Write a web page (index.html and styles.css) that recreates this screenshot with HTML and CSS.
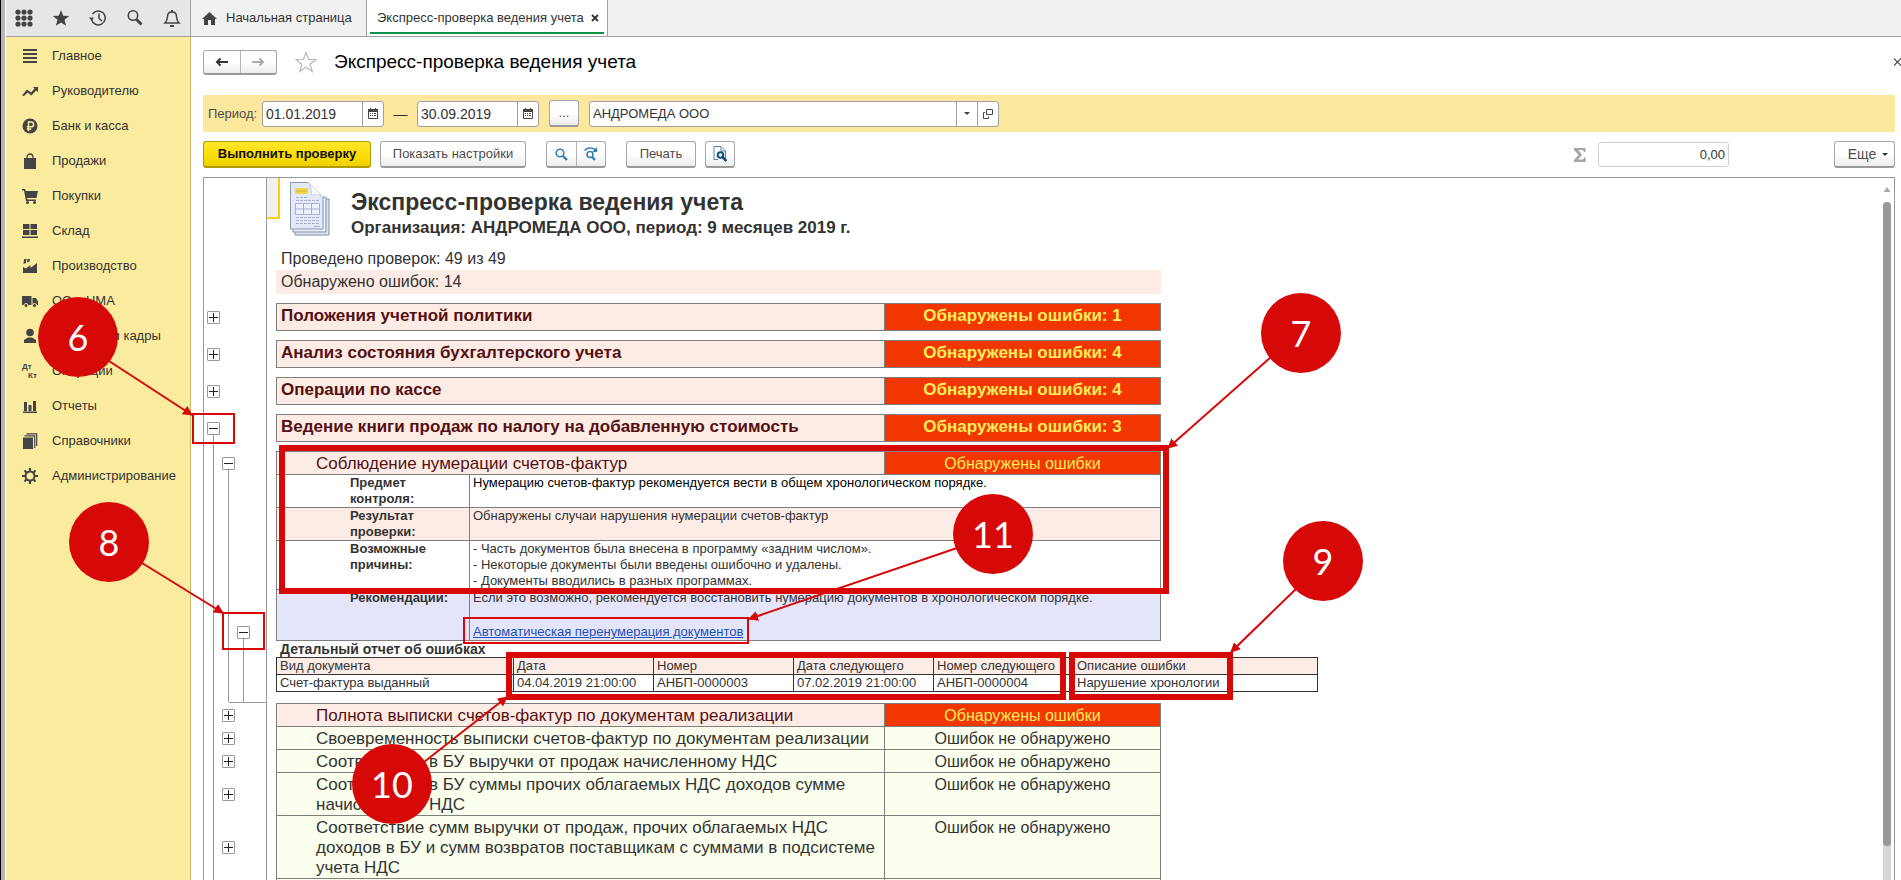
FILE: index.html
```html
<!DOCTYPE html>
<html lang="ru">
<head>
<meta charset="utf-8">
<title>Экспресс-проверка ведения учета</title>
<link rel="stylesheet" href="styles.css">
</head>
<body>
<div class="app">
  <header class="topbar">
    <div class="tools">
      <button class="tool" aria-label="Меню"><svg width="18" height="18" viewBox="0 0 18 18" fill="#444"><circle cx="3" cy="3" r="2.6"/><circle cx="9" cy="3" r="2.6"/><circle cx="15" cy="3" r="2.6"/><circle cx="3" cy="9" r="2.6"/><circle cx="9" cy="9" r="2.6"/><circle cx="15" cy="9" r="2.6"/><circle cx="3" cy="15" r="2.6"/><circle cx="9" cy="15" r="2.6"/><circle cx="15" cy="15" r="2.6"/></svg></button>
      <button class="tool" aria-label="Избранное"><svg width="18" height="18" viewBox="0 0 18 18" fill="#444"><path d="M9 1l2.200 5.700 6 .3-4.700 3.800 1.600 5.900L9 13.400l-5.100 3.300 1.600-5.900L.8 7l6-.3z"/></svg></button>
      <button class="tool" aria-label="История"><svg width="18" height="18" viewBox="0 0 18 18" fill="none" stroke="#444" stroke-width="1.500"><path d="M2.500 10.500A7 7 0 1 0 3.500 5"/><path d="M10 4.500v5l3 2.500"/><path d="M0 8.500h5l-2.500 3.200z" fill="#444" stroke="none"/></svg></button>
      <button class="tool" aria-label="Поиск"><svg width="18" height="18" viewBox="0 0 18 18" fill="none" stroke="#444"><circle cx="7" cy="6.500" r="4.700" stroke-width="1.600"/><path d="M10.500 10.500l5 5" stroke-width="3"/></svg></button>
      <button class="tool" aria-label="Уведомления"><svg width="18" height="18" viewBox="0 0 18 18" fill="none" stroke="#444" stroke-width="1.500"><path d="M2 14h14c-2-2-2.500-3-2.500-6.500C13.500 4.500 12 3 9 3S4.500 4.500 4.500 7.500C4.500 11 4 12 2 14z"/><path d="M9 1v2M7 17h4" stroke-width="2"/></svg></button>
    </div>
    <nav class="tabs">
      <a class="tab home" href="#"><svg width="15" height="13" viewBox="0 0 15 13" fill="#444"><path d="M7.500 0L15 7h-2v6H9V8H6v5H2V7H0z"/></svg>Начальная страница</a>
      <a class="tab active" href="#">Экспресс-проверка ведения учета<svg width="8" height="8" viewBox="0 0 8 8" stroke="#333" stroke-width="1.800"><path d="M1 1l6 6M7 1L1 7"/></svg></a>
    </nav>
  </header>
  <div class="body">
    <nav class="sidebar">
      <a href="#"><svg viewBox="0 0 16 16"><path d="M1 1h14v2H1zM1 5h14v2H1zM1 9h14v2H1zM1 13h14v2H1z"/></svg>Главное</a>
      <a href="#"><svg viewBox="0 0 16 16"><path d="M0 12.500l5-6 4 3 3.500-4L11 4h5v5l-1.800-1.600L9.300 12.500 5.500 9.500 2 13z"/></svg>Руководителю</a>
      <a href="#"><svg viewBox="0 0 16 16"><circle cx="8" cy="8" r="7.500"/><path d="M6.500 13V4h2.700a2.300 2.300 0 0 1 0 4.800H4.800M4.800 11h4.500" fill="none" stroke="#fbeb9e" stroke-width="1.500"/></svg>Банк и касса</a>
      <a href="#"><svg viewBox="0 0 16 16"><path d="M2 5h12v11H2z"/><path d="M5 7V4a3 3 0 0 1 6 0v3" fill="none" stroke="#444" stroke-width="1.300"/></svg>Продажи</a>
      <a href="#"><svg viewBox="0 0 16 16"><path d="M0 1h3l1 2h12l-1.500 7H5l.5 1.500H14V13H4L2 2.500H0z"/><circle cx="5.500" cy="14.500" r="1.500"/><circle cx="12.500" cy="14.500" r="1.500"/></svg>Покупки</a>
      <a href="#"><svg viewBox="0 0 16 16"><path d="M1 1h6.500v5H1zM8.500 1H15v5H8.500zM1 7h6.500v5H1zM8.500 7H15v5H8.500zM0 13.500h16V15H0z"/></svg>Склад</a>
      <a href="#"><svg viewBox="0 0 16 16"><path d="M1 15V9l3 1.500L8.500 7v3L15 5v10zM2 1h2.500L4 5 1.500 6zM5.500 1H8l-.5 2.500L5 4.500z"/></svg>Производство</a>
      <a href="#"><svg viewBox="0 0 16 16"><path d="M0 3h9.500v9H0zM10.500 5H14l2 3.500V12h-5.500z"/><circle cx="4" cy="12.500" r="2" stroke="#fbeb9e"/><circle cx="12.500" cy="12.500" r="2" stroke="#fbeb9e"/></svg>ОС и НМА</a>
      <a href="#"><svg viewBox="0 0 16 16"><circle cx="8" cy="4.500" r="3.800"/><path d="M2 15v-3l4-2.500h4l4 2.500v3z"/></svg>Зарплата и кадры</a>
      <a href="#"><svg viewBox="0 0 16 16"><text x="0" y="6" class="dk">Дт</text><text x="6" y="15" class="dk">Кт</text></svg>Операции</a>
      <a href="#"><svg viewBox="0 0 16 16"><path d="M2 4h3v9H2zM6.500 7h3v6h-3zM11 3h3v10h-3zM1 13.500h14V15H1z"/></svg>Отчеты</a>
      <a href="#"><svg viewBox="0 0 16 16"><path d="M1 4.500h10V16H1z"/><path d="M2.500 2.800h10.200V15M4.500.8h10.200V13" fill="none" stroke="#444" stroke-width="1.200"/></svg>Справочники</a>
      <a href="#"><svg viewBox="0 0 16 16" fill="none" stroke="#444"><circle cx="8" cy="8" r="4.500" fill="none" stroke-width="2"/><path d="M8 0v3M8 13v3M0 8h3M13 8h3M2.500 2.500l2 2M11.500 11.500l2 2M2.500 13.500l2-2M11.500 4.500l2-2" stroke-width="2.200"/></svg>Администрирование</a>
    </nav>
    <main class="main">
      <div class="titlebar">
        <div class="group nav">
          <button aria-label="Назад"><svg width="14" height="10" viewBox="0 0 14 10" fill="none" stroke="#333" stroke-width="2"><path d="M13 5H2M5.500 1.500L2 5l3.500 3.500"/></svg></button>
          <button aria-label="Вперед"><svg width="14" height="10" viewBox="0 0 14 10" fill="none" stroke="#aaa" stroke-width="2"><path d="M1 5h11M8.500 1.500L12 5 8.500 8.500"/></svg></button>
        </div>
        <svg class="fav" width="24" height="22" viewBox="0 0 24 22" fill="none" stroke="#b5bac0" stroke-width="1.200"><path d="M12 1.500l2.600 7H22l-5.900 4.700 2.200 7.300L12 16.200l-6.300 4.300 2.200-7.300L2 8.500h7.400z"/></svg>
        <h1>Экспресс-проверка ведения учета</h1>
        <button class="close" aria-label="Закрыть"><svg width="8" height="8" viewBox="0 0 8 8" stroke="#444" stroke-width="1.300"><path d="M0 0l8 8M8 0L0 8"/></svg></button>
      </div>
      <form class="filter">
        <label for="from">Период:</label>
        <div class="field date"><input id="from" value="01.01.2019"><button type="button" aria-label="Календарь"><svg width="10" height="11" viewBox="0 0 10 11"><path d="M.5 1.500h9v9h-9z" fill="#fff" stroke="#444"/><path d="M0 1h10v3H0zM2 0h1v1H2zM7 0h1v1H7zM2 5h1v1H2zM4 5h1v1H4zM6 5h2v1H6zM2 7h1v1H2zM4 7h1v1H4zM6 7h2v1H6z" fill="#444"/></svg></button></div>
        <span class="dash">—</span>
        <div class="field date"><input aria-label="Конец периода" value="30.09.2019"><button type="button" aria-label="Календарь"><svg width="10" height="11" viewBox="0 0 10 11"><path d="M.5 1.500h9v9h-9z" fill="#fff" stroke="#444"/><path d="M0 1h10v3H0zM2 0h1v1H2zM7 0h1v1H7zM2 5h1v1H2zM4 5h1v1H4zM6 5h2v1H6zM2 7h1v1H2zM4 7h1v1H4zM6 7h2v1H6z" fill="#444"/></svg></button></div>
        <button type="button" class="btn dots">...</button>
        <div class="field org"><input aria-label="Организация" value="АНДРОМЕДА ООО"><button type="button" aria-label="Выбрать"><svg width="6" height="3" viewBox="0 0 6 3"><path d="M0 0h6L3 3z" fill="#444"/></svg></button><button type="button" aria-label="Открыть"><svg width="10" height="10" viewBox="0 0 10 10" fill="none" stroke="#444"><path d="M3.500.5h6v5h-6zM2 3.500H.5v6h5V7.500"/></svg></button></div>
      </form>
      <div class="actions">
        <button class="btn primary">Выполнить проверку</button>
        <button class="btn settings">Показать настройки</button>
        <div class="group find">
          <button aria-label="Найти"><svg width="13" height="13" viewBox="0 0 13 13" fill="none" stroke="#2f7fb5"><circle cx="5" cy="5" r="3.800" stroke-width="1.600"/><path d="M8 8l4 4" stroke-width="2.400"/></svg></button>
          <button aria-label="Найти далее"><svg width="14" height="14" viewBox="0 0 14 14" fill="none" stroke="#2f7fb5"><circle cx="6" cy="7.500" r="3" stroke-width="1.500"/><path d="M8 10l3 3" stroke-width="2.200"/><path d="M.5 3.500C3 .5 7.500.3 11 2.500" stroke-width="1.500"/><path d="M13 0v5H8.500z" fill="#2f7fb5" stroke="none"/></svg></button>
        </div>
        <button class="btn print">Печать</button>
        <button class="btn preview" aria-label="Просмотр"><svg width="14" height="16" viewBox="0 0 14 16" fill="none"><path d="M12.500 14V5L8 .5H1v13h4" fill="#fff" stroke="#5c87a6"/><path d="M8 .5V5h4.500" stroke="#5c87a6"/><circle cx="7.500" cy="9" r="2.800" stroke="#14537c" stroke-width="2"/><path d="M9.500 11l4 4" stroke="#14537c" stroke-width="2.600"/></svg></button>
        <svg class="sigma" width="12" height="14" viewBox="0 0 12 14" fill="#a6a6a6"><path d="M0 0h11.500v4H10l-1-2H4.500L8 7l-4 4.500h5l1.200-2h1.500V14H0v-2l4.500-5L0 2z"/></svg>
        <input class="sum" aria-label="Сумма" value="0,00">
        <button class="btn more">Еще<svg width="6" height="3" viewBox="0 0 6 3"><path d="M0 0h6L3 3z" fill="#333"/></svg></button>
      </div>
      <section class="report">
        <div class="sheet">
          <div class="band">
            <div class="gutter"></div>
            <div class="intro">
              <div class="corner"></div>
              <div class="heading">
                <svg width="42" height="54" viewBox="0 0 42 54"><path d="M5 17h34v36H5z" fill="#dfe4ee" stroke="#7f8fa8"/><path d="M3 15h33v35H3z" fill="#e9edf5" stroke="#8391ab"/><path d="M.5.500h18L33 15v32H.5z" fill="#e3e9f6" stroke="#8c99b3"/><path d="M18.500.500L33 15c-4-3-9-3-12-2 1-4 0-9-2.500-12.500z" fill="#fff" stroke="#c9cfdb"/><path d="M5 6h13v6H5z" fill="#f1d94c"/><path d="M6 9h11" stroke="#cdb53a"/><g stroke="#a9afd6" stroke-dasharray="3 1"><path d="M6 15.500h12M6 18.500h23M6 35.500h24M6 38.500h24M6 41.500h24"/></g><path d="M24 44.500h6" stroke="#a9afd6"/><path d="M5.500 21.500h24v11h-24zM5.500 27h24M13.500 21.500v11M21.500 21.500v11" fill="#eef1fb" stroke="#a9afd6"/></svg>
                <div><h2>Экспресс-проверка ведения учета</h2><p class="orgline">Организация: АНДРОМЕДА ООО, период: 9 месяцев 2019 г.</p></div>
              </div>
              <p class="stat">Проведено проверок: 49 из 49</p>
              <p class="stat bad">Обнаружено ошибок: 14</p>
            </div>
          </div>

          <div class="band"><div class="gutter top"><div class="slot"><button class="pm plus" aria-label="Развернуть"></button></div></div>
            <table class="grid sect"><tr><th>Положения учетной политики</th><td class="state">Обнаружены ошибки: 1</td></tr></table></div>
          <div class="band"><div class="gutter top"><div class="slot"><button class="pm plus" aria-label="Развернуть"></button></div></div>
            <table class="grid sect"><tr><th>Анализ состояния бухгалтерского учета</th><td class="state">Обнаружены ошибки: 4</td></tr></table></div>
          <div class="band"><div class="gutter top"><div class="slot"><button class="pm plus" aria-label="Развернуть"></button></div></div>
            <table class="grid sect"><tr><th>Операции по кассе</th><td class="state">Обнаружены ошибки: 4</td></tr></table></div>
          <div class="band"><div class="gutter top"><div class="slot from"><button class="pm" aria-label="Свернуть"></button></div></div>
            <table class="grid sect"><tr><th>Ведение книги продаж по налогу на добавленную стоимость</th><td class="state">Обнаружены ошибки: 3</td></tr></table></div>

          <div class="band"><div class="gutter"><div class="slot line"></div><div class="slot from"><button class="pm" aria-label="Свернуть"></button></div></div>
            <table class="grid first"><tr class="err"><td class="check">Соблюдение нумерации счетов-фактур</td><td class="state">Обнаружены ошибки</td></tr></table></div>
          <div class="band"><div class="gutter"><div class="slot line"></div><div class="slot line"></div></div>
            <table class="grid detail">
              <tr class="strong"><th>Предмет контроля:</th><td>Нумерацию счетов-фактур рекомендуется вести в общем хронологическом порядке.</td></tr>
              <tr class="pink"><th>Результат проверки:</th><td>Обнаружены случаи нарушения нумерации счетов-фактур</td></tr>
              <tr><th>Возможные причины:</th><td>- Часть документов была внесена в программу «задним числом».<br>- Некоторые документы были введены ошибочно и удалены.<br>- Документы вводились в разных программах.</td></tr>
            </table></div>
          <div class="band"><div class="gutter"><div class="slot line"></div><div class="slot line"></div><div class="slot low"><button class="pm" aria-label="Свернуть"></button></div></div>
            <table class="grid detail">
              <tr class="advice"><th>Рекомендации:</th><td>Если это возможно, рекомендуется восстановить нумерацию документов в хронологическом порядке.<a href="#">Автоматическая перенумерация документов</a></td></tr>
            </table></div>
          <div class="band"><div class="gutter"><div class="slot line"></div><div class="slot line end"></div><div class="slot line end"></div><div class="rest"></div></div>
            <div class="errors">
              <h3>Детальный отчет об ошибках</h3>
              <table class="grid list">
                <colgroup><col class="c1"><col class="c2"><col class="c3"><col class="c3"><col class="c3"><col></colgroup>
                <tr class="pink"><th>Вид документа</th><th>Дата</th><th>Номер</th><th>Дата следующего</th><th>Номер следующего</th><th>Описание ошибки</th></tr>
                <tr><td>Счет-фактура выданный</td><td>04.04.2019 21:00:00</td><td>АНБП-0000003</td><td>07.02.2019 21:00:00</td><td>АНБП-0000004</td><td>Нарушение хронологии</td></tr>
              </table>
            </div></div>

          <div class="band"><div class="gutter"><div class="slot line"></div><div class="slot"><button class="pm plus" aria-label="Развернуть"></button></div></div>
            <table class="grid first"><tr class="err"><td class="check">Полнота выписки счетов-фактур по документам реализации</td><td class="state">Обнаружены ошибки</td></tr></table></div>
          <div class="band"><div class="gutter"><div class="slot line"></div><div class="slot"><button class="pm plus" aria-label="Развернуть"></button></div></div>
            <table class="grid"><tr class="ok"><td class="check">Своевременность выписки счетов-фактур по документам реализации</td><td class="state">Ошибок не обнаружено</td></tr></table></div>
          <div class="band"><div class="gutter"><div class="slot line"></div><div class="slot"><button class="pm plus" aria-label="Развернуть"></button></div></div>
            <table class="grid"><tr class="ok"><td class="check">Соответствие в БУ выручки от продаж начисленному НДС</td><td class="state">Ошибок не обнаружено</td></tr></table></div>
          <div class="band"><div class="gutter"><div class="slot line"></div><div class="slot"><button class="pm plus" aria-label="Развернуть"></button></div></div>
            <table class="grid"><tr class="ok"><td class="check">Соответствие в БУ суммы прочих облагаемых НДС доходов сумме начисленного НДС</td><td class="state">Ошибок не обнаружено</td></tr></table></div>
          <div class="band"><div class="gutter"><div class="slot line"></div><div class="slot"><button class="pm plus" aria-label="Развернуть"></button></div></div>
            <table class="grid"><tr class="ok"><td class="check">Соответствие сумм выручки от продаж, прочих облагаемых НДС<br>доходов в БУ и сумм возвратов поставщикам с суммами в подсистеме учета НДС</td><td class="state">Ошибок не обнаружено</td></tr></table></div>
          <div class="band"><div class="gutter"><div class="slot line"></div></div>
            <table class="grid"><tr class="ok"><td class="check"></td><td class="state"></td></tr></table></div>
        </div>
        <div class="scroll"><svg width="8" height="5" viewBox="0 0 8 5"><path d="M4 0l3.500 5h-7z" fill="#aaa"/></svg><div class="track"><div class="thumb"></div></div></div>
      </section>
    </main>
  </div>
  <svg class="notes" width="1901" height="880" viewBox="0 0 1901 880">
    <defs><marker id="tip" viewBox="0 0 10 10" refX="9" refY="5" markerWidth="10" markerHeight="10" markerUnits="userSpaceOnUse" orient="auto"><path d="M0 0l10 5-10 5z" fill="#d60808"/></marker></defs>
    <g fill="none" stroke="#d60808" stroke-width="2">
      <path d="M193 414h41v29h-41zM223 613h41v36h-41zM464 618h284v25H464z"/>
      <path d="M282 448h884v143H282zM509 655h554v42H509zM1072 655h158v42h-158z" stroke-width="6"/>
      <path d="M109 361L192 415" marker-end="url(#tip)"/><path d="M1271 357L1168 448" marker-end="url(#tip)"/><path d="M142 563L223 613" marker-end="url(#tip)"/><path d="M1297 588L1231 652" marker-end="url(#tip)"/><path d="M424 762L507 697" marker-end="url(#tip)"/><path d="M957 548L749 619" marker-end="url(#tip)"/>
    </g>
    <g fill="#d60808"><circle cx="78" cy="337" r="40"/><circle cx="1301" cy="333" r="40"/><circle cx="109" cy="542" r="40"/><circle cx="1323" cy="561" r="40"/><circle cx="392" cy="784" r="40"/><circle cx="993" cy="534" r="40"/></g>
    <g class="num"><text x="78" y="351">6</text><text x="1301" y="347">7</text><text x="109" y="556">8</text><text x="1323" y="575">9</text><text x="392" y="798">10</text><text x="993" y="548">11</text></g>
  </svg>
</div>
</body>
</html>
```
FILE: styles.css
```css
* { box-sizing: border-box; }
body { margin: 0; font: 14px/16px "Liberation Sans", Arial, sans-serif; color: #333; background: #fff; }
h1, h2, h3, p { margin: 0; }
button, input { font: inherit; color: inherit; margin: 0; }
button { padding: 0; border: 0; background: none; display: flex; align-items: center; justify-content: center; }
a { color: inherit; text-decoration: none; }

.app { position: relative; height: 100vh; overflow: hidden; display: flex; flex-direction: column; border-left: 1px solid #000; box-shadow: inset 4px 0 #b9b5b7; padding-left: 5px; }
.topbar { display: flex; height: 37px; flex: none; background: #f1f1f1; border-bottom: 1px solid #a0a0a0; }
.tools { width: 185px; background: #e6e6e6; border-right: 1px solid #a0a0a0; display: flex; align-items: center; gap: 19px; padding-left: 9px; }
.tabs { display: flex; font-size: 13px; }
.tab { display: flex; align-items: center; border-right: 1px solid #a0a0a0; }
.home { width: 176px; padding-left: 11px; gap: 9px; }
.active { width: 241px; padding-left: 10px; gap: 7px; background: #fff; box-shadow: inset 3px 0 #fff, inset -3px 0 #fff, inset 0 -2px #fff, inset 0 -4px #0a9048; }

.body { flex: 1; min-height: 0; display: flex; }
.sidebar { width: 185px; flex: none; padding-top: 1px; background: #fbeb9e; border-right: 1px solid #c9b972; }
.sidebar a { display: flex; align-items: center; height: 35px; padding-left: 16px; gap: 14px; font-size: 13px; white-space: nowrap; }
.sidebar svg { width: 16px; height: 16px; fill: #444; overflow: visible; flex: none; }
.dk { font: bold 8px "Liberation Sans", Arial, sans-serif; }

.main { flex: 1; min-width: 0; display: flex; flex-direction: column; padding-left: 12px; }
.titlebar { display: flex; align-items: center; height: 58px; padding-bottom: 8px; }
.group { display: flex; border: 1px solid #a8a8a8; border-bottom: 2px solid #999; border-radius: 3px; background: linear-gradient(#fff 50%, #ececec); }
.group button { flex: 1; }
.group button + button { border-left: 1px solid #b4b4b4; }
.nav { width: 74px; height: 25px; }
.fav { margin: 0 16px 0 17px; }
h1 { font-size: 19px; line-height: 22px; font-weight: normal; color: #000; }
.close { margin: 0 0 0 auto; width: 7px; overflow: hidden; justify-content: flex-start; }
.filter { display: flex; align-items: center; height: 37px; padding-left: 5px; margin-right: 6px; background: #fbe89e; }
.filter label { width: 54px; font-size: 13px; color: #4d4d4d; }
.field { display: flex; height: 26px; border: 1px solid #a0a0a0; border-radius: 3px; background: #fff; overflow: hidden; }
.field input { flex: 1; min-width: 0; border: 0; padding: 0 3px; background: none; }
.field button { width: 21px; border-left: 1px solid #a0a0a0; }
.date { width: 122px; }
.dash { width: 33px; text-align: center; }
.org { width: 410px; }
.org input { font-size: 13px; }
.btn { height: 27px; border: 1px solid #a8a8a8; border-bottom: 2px solid #999; border-radius: 3px; background: linear-gradient(#fff 50%, #ececec); font-size: 13px; color: #4d4d4d; }
.dots { width: 30px; margin: 0 10px; }
.actions { display: flex; align-items: center; height: 45px; padding-right: 6px; }
.primary { width: 168px; margin-right: 9px; font-weight: bold; color: #111; background: linear-gradient(#ffe62e, #fbdc00 60%, #efd000); border-color: #b09a00; }
.settings { width: 146px; margin-right: 20px; }
.find { width: 60px; height: 27px; margin-right: 20px; }
.print { width: 70px; margin-right: 9px; }
.preview { width: 30px; }
.sigma { margin: 0 12px 0 auto; }
.sum { width: 131px; height: 25px; border: 1px solid #d0d0d0; border-radius: 3px; text-align: right; padding: 0 3px; font-size: 13px; margin-right: 105px; }
.more { width: 61px; gap: 6px; padding-left: 7px; font-size: 14px; }

.report { flex: 1; min-height: 0; display: flex; margin-right: 6px; border: 1px solid #999; border-bottom: 0; }
.sheet { flex: 1; min-width: 0; overflow: hidden; }
.band { display: flex; }
.gutter { flex: none; width: 63px; margin-right: 9px; padding-left: 2px; border-right: 1px solid #999; display: grid; grid-template-columns: 15px 15px 15px 1fr; }
.slot { display: flex; align-items: center; justify-content: center; }
.slot:nth-child(2) { grid-column: 2; }
.slot:only-child { grid-column: 1; }
.top .slot { padding-bottom: 9px; }
.line { background: linear-gradient(#999, #999) center / 1px 100% no-repeat; }
.from { background: linear-gradient(#999, #999) center bottom / 1px 50% no-repeat; }
.low { align-items: flex-end; padding-bottom: 2px; background: linear-gradient(#999, #999) center bottom / 1px 4px no-repeat; }
.rest, .end { border-bottom: 1px solid #999; }
.end:nth-child(2) { border-image: linear-gradient(90deg, transparent 50%, #999 50%) 1; }
.pm { width: 13px; height: 13px; border: 1px solid #999; border-radius: 1px; background: linear-gradient(#222, #222) center / 9px 1px no-repeat #fff; }
.plus { background: linear-gradient(#222, #222) center / 9px 1px no-repeat, linear-gradient(#222, #222) center / 1px 9px no-repeat #fff; }

.intro { position: relative; height: 125px; width: 885px; }
.corner { position: absolute; left: -9px; top: 0; width: 13px; height: 41px; background: #f0f0f0; border: solid #fccb1c; border-width: 0 2px 2px 0; }
.heading { display: flex; gap: 19px; padding: 4px 0 0 14px; height: 70px; }
h2 { font-size: 23px; line-height: 26px; margin-top: 7px; }
.orgline { font-size: 17px; line-height: 26px; font-weight: bold; }
.stat { font-size: 16px; line-height: 22px; padding-left: 5px; }
.bad { line-height: 24px; background: #fdebe5; }

.grid { width: 885px; table-layout: fixed; border-spacing: 0; border-left: 1px solid #7f7f7f; font-size: 17px; line-height: 20px; }
.grid th, .grid td { padding: 0; text-align: left; vertical-align: top; border: solid #7f7f7f; border-width: 0 1px 1px 0; }
.sect, .first { border-top: 1px solid #7f7f7f; }
.sect { margin-bottom: 9px; }
.grid.sect th { height: 27px; padding: 2px 4px; background: #fdebe5; color: #551111; }
.grid .state { width: 276px; text-align: center; }
.grid.sect .state { padding: 2px 0; font-weight: bold; }
.sect .state, .err .state { background: #f23600; color: #ffee5c; }
.grid .check { padding: 2px 0 0 39px; height: 23px; }
.grid .ok .state, .grid .err .state { padding-top: 2px; font-size: 16px; }
.err .check { background: #fdebe5; color: #551111; }
.ok td { background: #fbffee; }
.grid.detail { font-size: 13px; line-height: 16px; }
.grid.detail th { width: 193px; padding: 0 40px 0 73px; }
.grid.detail td { padding-left: 3px; }
.strong td { color: #000; }
.pink { background: #fdebe5; }
.advice { background: #e4e5fa; }
.detail a { display: block; margin-top: 18px; color: #1c50b8; text-decoration: underline; }
.errors { height: 62px; }
h3 { font-size: 14px; line-height: 16px; padding-left: 4px; }
.grid.list { width: 1042px; font-size: 13px; line-height: 16px; border: solid #333; border-width: 1px 0 0 1px; }
.grid.list th, .grid.list td { font-weight: normal; padding-left: 3px; border-color: #333; white-space: nowrap; }
.c1 { width: 237px; }
.c2, .c3 { width: 140px; }

.scroll { width: 14px; flex: none; padding: 9px 2px 0; display: flex; flex-direction: column; gap: 10px; align-items: center; }
.track { flex: 1; width: 8px; background: #d6d6d6; border-radius: 4px 4px 0 0; }
.thumb { height: 95%; background: #999; border-radius: 4px; }

.notes { position: absolute; left: -1px; top: 0; pointer-events: none; }
.num { font: 36px Lato, sans-serif; fill: #fff; text-anchor: middle; }
```
